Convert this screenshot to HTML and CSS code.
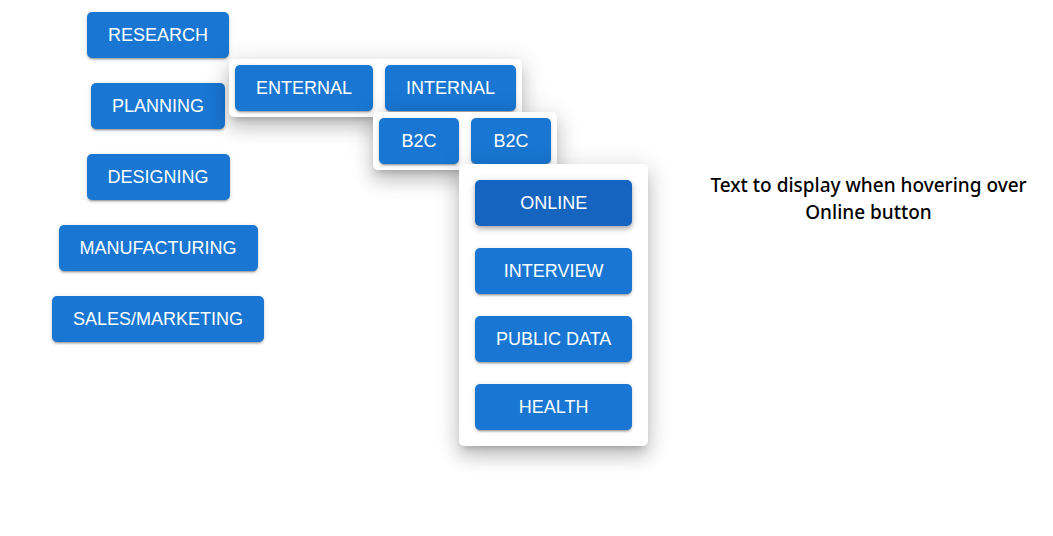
FILE: index.html
```html
<!DOCTYPE html>
<html lang="en">
<head>
<meta charset="utf-8">
<title>Process menu</title>
<link rel="stylesheet" href="styles.css">
</head>
<body>
<main class="page">
  <nav class="stages" aria-label="Stages">
    <div class="stage">
      <button class="btn" type="button">RESEARCH</button>
      <div class="popper row">
        <button class="btn" type="button">ENTERNAL</button>
        <button class="btn" type="button">INTERNAL</button>
      </div>
      <div class="popper row popper-b2c">
        <button class="btn btn-short" type="button">B2C</button>
        <button class="btn btn-short" type="button">B2C</button>
      </div>
      <div class="popper column popper-source">
        <button class="btn btn-active" type="button">ONLINE</button>
        <button class="btn" type="button">INTERVIEW</button>
        <button class="btn" type="button">PUBLIC DATA</button>
        <button class="btn" type="button">HEALTH</button>
      </div>
    </div>
    <button class="btn" type="button">PLANNING</button>
    <button class="btn" type="button">DESIGNING</button>
    <button class="btn" type="button">MANUFACTURING</button>
    <button class="btn" type="button">SALES/MARKETING</button>
  </nav>
  <p class="description">Text to display when hovering over Online button</p>
</main>
</body>
</html>
```
FILE: styles.css
```css
* {
  box-sizing: border-box;
}

body {
  margin: 0;
  background: #fff;
  color: #000;
  font-family: "Liberation Sans", Arial, sans-serif;
}

.page {
  display: flex;
  justify-content: space-between;
  align-items: flex-start;
  min-height: 100vh;
  padding: 12px 22px 0 52px;
}

.stages {
  display: flex;
  flex-direction: column;
  align-items: center;
  gap: 25px;
}

.stage {
  position: relative;
  z-index: 1;
}

.btn {
  display: block;
  height: 46px;
  padding: 0 21px;
  border: 0;
  border-radius: 5px;
  background: #1976d2;
  box-shadow: 0 3px 1px -2px rgba(0, 0, 0, 0.2), 0 2px 2px rgba(0, 0, 0, 0.14), 0 1px 5px rgba(0, 0, 0, 0.12);
  color: #fff;
  font: 400 18px/32px "Liberation Sans", Arial, sans-serif;
  white-space: nowrap;
  cursor: pointer;
}

.btn-short {
  width: 80px;
}

.btn-active {
  background: #1565c0;
  box-shadow: 0 2px 4px -1px rgba(0, 0, 0, 0.2), 0 4px 5px rgba(0, 0, 0, 0.14), 0 1px 10px rgba(0, 0, 0, 0.12);
}

.popper {
  position: absolute;
  top: 47px;
  left: 100%;
  display: flex;
  border-radius: 5px;
  background: #fff;
  box-shadow: 0 6px 7px -4px rgba(0, 0, 0, 0.2), 0 11px 17px 1px rgba(0, 0, 0, 0.14), 0 4px 23px 3px rgba(0, 0, 0, 0.12);
}

.row {
  gap: 12px;
  padding: 6px;
}

.popper-b2c {
  top: 100px;
  left: 286px;
}

.column {
  flex-direction: column;
  gap: 22px;
  padding: 16px;
}

.popper-source {
  top: 152px;
  left: 372px;
}

.description {
  width: 325px;
  margin: 160px 0 0;
  font: 500 19px/27px "Noto Sans", sans-serif;
  text-align: center;
}
```
